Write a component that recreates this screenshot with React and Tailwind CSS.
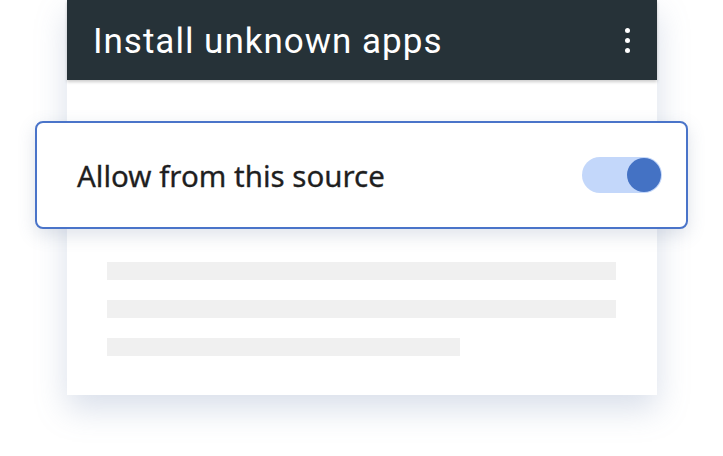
import React from 'react';

const App = () => {
    return (
        <div className="w-[723px] h-[456px] bg-white overflow-hidden relative" style={{ fontFamily: 'Roboto, "Noto Sans", sans-serif' }}>
            <div className="ml-[67px] w-[590px] h-[395px] bg-white shadow-[0_14px_30px_rgba(120,140,180,0.28)] flex flex-col">
                <div className="h-[80px] bg-[#263238] flex items-center justify-between pl-[26px] pr-[20px] shadow-[0_2px_3px_rgba(0,0,0,0.2)]">
                    <h1 className="text-white text-[35px] leading-none tracking-[1px] mt-[2px]">Install unknown apps</h1>
                    <div className="flex flex-col items-center gap-[5px] w-[20px]">
                        <span className="w-[5px] h-[5px] rounded-full bg-white" />
                        <span className="w-[5px] h-[5px] rounded-full bg-white" />
                        <span className="w-[5px] h-[5px] rounded-full bg-white" />
                    </div>
                </div>

                <div className="mt-[41px] ml-[-32px] mr-[-31px] h-[108px] bg-white border-2 border-[#4a74c9] rounded-[8px] shadow-[0_6px_18px_rgba(80,100,140,0.18)] flex items-center justify-between pl-[40px] pr-[24px] relative z-10">
                    <span className="text-[#1f1f1f] text-[29.5px] leading-none mt-[2px] [-webkit-text-stroke:0.3px_#1f1f1f]" style={{ fontFamily: '"Noto Sans", Roboto, sans-serif' }}>Allow from this source</span>
                    <div className="w-[80px] h-[36px] rounded-full bg-[#c3d7fa] flex items-center justify-end pr-[1px]">
                        <span className="w-[34px] h-[34px] rounded-full bg-[#4472c4]" />
                    </div>
                </div>

                <div className="flex flex-col gap-[20px] pl-[40px] pr-[41px] mt-[33px]">
                    <div className="h-[18px] bg-[#f0f0f0]" />
                    <div className="h-[18px] bg-[#f0f0f0]" />
                    <div className="h-[18px] w-[353px] bg-[#f0f0f0]" />
                </div>
            </div>
        </div>
    );
};

export default App;
